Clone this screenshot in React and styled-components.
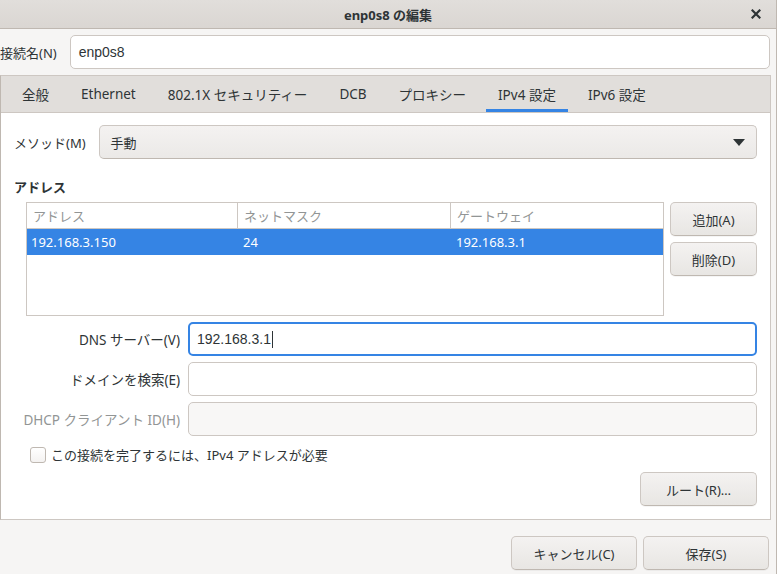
import React from "react";
import styled, { createGlobalStyle } from "styled-components";

const COLORS = {
  text: "#2e3436",
  dim: "#929595",
  border: "#cdc7c2",
  borderDark: "#bfb8b1",
  window: "#f6f5f4",
  tabBar: "#e1dedb",
  accent: "#3584e4",
};

const GlobalStyle = createGlobalStyle`
  html, body {
    margin: 0;
    padding: 0;
    background: #ffffff;
  }
  body {
    font-family: "Noto Sans", "Noto Sans CJK JP", sans-serif;
    font-size: 13px;
    color: ${COLORS.text};
  }
`;

const TABS = ["全般", "Ethernet", "802.1X セキュリティー", "DCB", "プロキシー", "IPv4 設定", "IPv6 設定"];

const ADDRESSES = [{ address: "192.168.3.150", netmask: "24", gateway: "192.168.3.1" }];

const CloseIcon = () => (
  <svg width="10" height="10" viewBox="0 0 10 10">
    <path d="M1.5 1.5 L8.5 8.5 M8.5 1.5 L1.5 8.5" stroke="#2e3436" strokeWidth="2.2" strokeLinecap="square" />
  </svg>
);

const App = () => {
  return (
    <>
      <GlobalStyle />
      <Window>
        <TitleBar>
          <span />
          <Title>enp0s8 の編集</Title>
          <CloseButton>
            <CloseIcon />
          </CloseButton>
        </TitleBar>

        <NameRow>
          <Label>接続名(N)</Label>
          <Field>enp0s8</Field>
        </NameRow>

        <Notebook>
          <TabBar>
            {TABS.map((tab) => (
              <Tab key={tab} active={tab === "IPv4 設定"}>
                {tab}
              </Tab>
            ))}
          </TabBar>

          <Page>
            <MethodRow>
              <Label>メソッド(M)</Label>
              <Combo>
                <span>手動</span>
                <Arrow />
              </Combo>
            </MethodRow>

            <Heading>アドレス</Heading>

            <AddressRow>
              <Table>
                <HeaderRow>
                  <HeaderCell>アドレス</HeaderCell>
                  <HeaderCell>ネットマスク</HeaderCell>
                  <HeaderCell last>ゲートウェイ</HeaderCell>
                </HeaderRow>
                {ADDRESSES.map((row) => (
                  <BodyRow key={row.address} selected>
                    <Cell>{row.address}</Cell>
                    <Cell>{row.netmask}</Cell>
                    <Cell>{row.gateway}</Cell>
                  </BodyRow>
                ))}
              </Table>
              <SideButtons>
                <Button>追加(A)</Button>
                <Button>削除(D)</Button>
              </SideButtons>
            </AddressRow>

            <FormGrid>
              <FormLabel>DNS サーバー(V)</FormLabel>
              <Field focused>
                192.168.3.1
                <Caret />
              </Field>
              <FormLabel>ドメインを検索(E)</FormLabel>
              <Field />
              <FormLabel disabled>DHCP クライアント ID(H)</FormLabel>
              <Field disabled />
            </FormGrid>

            <CheckRow>
              <CheckBox />
              <span>この接続を完了するには、IPv4 アドレスが必要</span>
            </CheckRow>

            <RouteRow>
              <Button wide>ルート(R)…</Button>
            </RouteRow>
          </Page>
        </Notebook>

        <ActionRow>
          <Button action>キャンセル(C)</Button>
          <Button action>保存(S)</Button>
        </ActionRow>
      </Window>
    </>
  );
};

const Window = styled.div`
  width: 776px;
  height: 574px;
  background: ${COLORS.window};
  border-right: 1px solid ${COLORS.borderDark};
  display: flex;
  flex-direction: column;
  overflow: hidden;
`;

const TitleBar = styled.div`
  height: 28px;
  flex-shrink: 0;
  display: grid;
  grid-template-columns: 40px 1fr 40px;
  align-items: center;
  background: linear-gradient(#e1dedb, #dad6d2);
  border-bottom: 1px solid ${COLORS.borderDark};
`;

const Title = styled.div`
  text-align: center;
  font-weight: bold;
`;

const CloseButton = styled.div`
  display: flex;
  justify-content: center;
`;

const NameRow = styled.div`
  display: flex;
  align-items: center;
  gap: 13px;
  padding: 6px 6px 6px 0;
`;

const Label = styled.span`
  white-space: nowrap;
`;

const Field = styled.div`
  flex: 1;
  box-sizing: border-box;
  height: 34px;
  display: flex;
  align-items: center;
  border-radius: 5px;
  border: ${(p) => (p.focused ? `2px solid ${COLORS.accent}` : `1px solid ${COLORS.border}`)};
  padding: 0 8px 0 ${(p) => (p.focused ? "7px" : "8px")};
  background: ${(p) => (p.disabled ? "#f8f7f6" : "#ffffff")};
  font-family: "Liberation Sans", "Noto Sans CJK JP", sans-serif;
  font-size: 14px;
`;

const Caret = styled.span`
  display: inline-block;
  width: 1px;
  height: 17px;
  background: ${COLORS.text};
  margin-left: 1px;
`;

const Notebook = styled.div`
  height: 445px;
  flex-shrink: 0;
  box-sizing: border-box;
  margin-right: 5px;
  border: 1px solid ${COLORS.border};
  border-left-color: ${COLORS.borderDark};
  display: flex;
  flex-direction: column;
  overflow: hidden;
`;

const TabBar = styled.div`
  height: 36px;
  flex-shrink: 0;
  display: flex;
  align-items: stretch;
  gap: 8px;
  padding-left: 9px;
  background: ${COLORS.tabBar};
  border-bottom: 1px solid ${COLORS.border};
`;

const Tab = styled.div`
  display: flex;
  align-items: center;
  padding: 3px 12px 0;
  box-sizing: border-box;
  font-size: 13.5px;
  border-bottom: 3px solid ${(p) => (p.active ? COLORS.accent : "transparent")};
  color: ${COLORS.text};
`;

const Page = styled.div`
  flex: 1;
  background: #ffffff;
  padding: 12px 13px;
  display: flex;
  flex-direction: column;
`;

const MethodRow = styled.div`
  display: flex;
  align-items: center;
  gap: 13px;
`;

const Combo = styled.div`
  flex: 1;
  height: 34px;
  box-sizing: border-box;
  display: flex;
  align-items: center;
  justify-content: space-between;
  padding: 0 11px;
  border: 1px solid ${COLORS.border};
  border-bottom-color: ${COLORS.borderDark};
  border-radius: 5px;
  background: linear-gradient(#f4f2f1, #ebe9e7);
`;

const Arrow = styled.span`
  width: 0;
  height: 0;
  border-left: 6px solid transparent;
  border-right: 6px solid transparent;
  border-top: 7px solid ${COLORS.text};
`;

const Heading = styled.div`
  font-weight: bold;
  margin: 18px 0 6px;
`;

const AddressRow = styled.div`
  display: flex;
  align-items: flex-start;
  gap: 6px;
  padding-left: 12px;
`;

const Table = styled.div`
  flex: 1;
  height: 114px;
  box-sizing: border-box;
  border: 1px solid ${COLORS.border};
  background: #ffffff;
`;

const HeaderRow = styled.div`
  display: grid;
  grid-template-columns: 211px 213px 1fr;
  height: 25px;
  border-bottom: 1px solid ${COLORS.border};
`;

const HeaderCell = styled.div`
  display: flex;
  align-items: center;
  padding-left: 6px;
  color: ${COLORS.dim};
  border-right: ${(p) => (p.last ? "none" : `1px solid ${COLORS.border}`)};
`;

const BodyRow = styled.div`
  display: grid;
  grid-template-columns: 212px 213px 1fr;
  height: 26px;
  align-items: center;
  background: ${(p) => (p.selected ? COLORS.accent : "transparent")};
  color: ${(p) => (p.selected ? "#ffffff" : COLORS.text)};
`;

const Cell = styled.div`
  padding-left: 4px;
`;

const SideButtons = styled.div`
  display: flex;
  flex-direction: column;
  gap: 6px;
  width: 87px;
`;

const Button = styled.div`
  height: 34px;
  flex-shrink: 0;
  box-sizing: border-box;
  display: flex;
  align-items: center;
  justify-content: center;
  width: ${(p) => (p.action ? "126px" : p.wide ? "117px" : "auto")};
  border: 1px solid ${COLORS.border};
  border-bottom-color: ${COLORS.borderDark};
  border-radius: 5px;
  background: linear-gradient(#f4f2f1, #e8e6e3);
  box-shadow: 0 1px rgba(0, 0, 0, 0.04);
  color: ${COLORS.text};
`;

const FormGrid = styled.div`
  display: grid;
  grid-template-columns: 166px 1fr;
  column-gap: 8px;
  row-gap: 6px;
  align-items: center;
  margin-top: 6px;
`;

const FormLabel = styled.div`
  text-align: right;
  white-space: nowrap;
  font-size: 13.5px;
  color: ${(p) => (p.disabled ? COLORS.dim : COLORS.text)};
`;

const CheckRow = styled.div`
  display: flex;
  align-items: center;
  gap: 5px;
  padding-left: 16px;
  margin-top: 9px;
`;

const CheckBox = styled.span`
  width: 14px;
  height: 14px;
  border: 1px solid ${COLORS.borderDark};
  border-radius: 3px;
  background: linear-gradient(#ffffff, #f4f2f1);
`;

const RouteRow = styled.div`
  display: flex;
  justify-content: flex-end;
  margin-top: 8px;
`;

const ActionRow = styled.div`
  display: flex;
  justify-content: flex-end;
  gap: 6px;
  padding: 16px 7px 0 0;
`;

export default App;
